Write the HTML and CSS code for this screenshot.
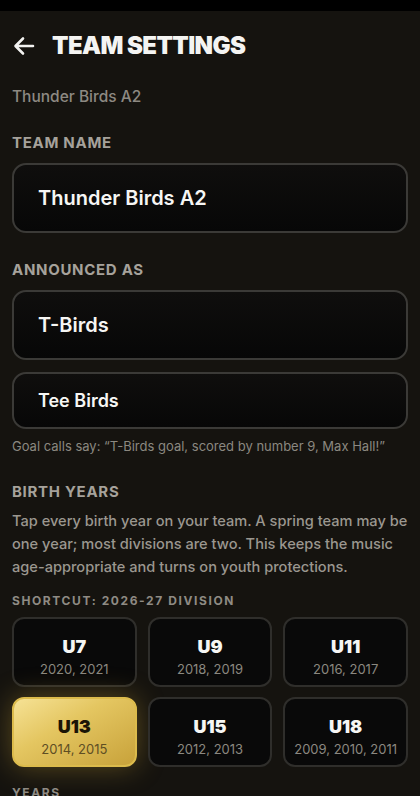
FILE: index.html
```html
<!DOCTYPE html>
<html lang="en">
<head>
<meta charset="utf-8">
<meta name="viewport" content="width=device-width, initial-scale=1">
<title>Team Settings</title>
<link rel="stylesheet" href="styles.css">
</head>
<body>
<div class="statusbar"></div>
<header class="header">
  <svg class="back" viewBox="0 0 24 24" width="24" height="24" aria-hidden="true">
    <path d="M21 12H4M11 4.5L3.5 12L11 19.5" fill="none" stroke="#f2f2f0" stroke-width="2.6" stroke-linecap="round" stroke-linejoin="round"/>
  </svg>
  <h1 class="title">TEAM SETTINGS</h1>
</header>
<main class="content">
  <p class="subtitle">Thunder Birds A2</p>

  <h2 class="label label-first">TEAM NAME</h2>
  <div class="field field-lg">Thunder Birds A2</div>

  <h2 class="label">ANNOUNCED AS</h2>
  <div class="field field-lg">T-Birds</div>
  <div class="field field-sm">Tee Birds</div>
  <p class="helper">Goal calls say: “T-Birds goal, scored by number 9, Max Hall!”</p>

  <h2 class="label">BIRTH YEARS</h2>
  <p class="desc">Tap every birth year on your team. A spring team may be one year; most divisions are two. This keeps the music age-appropriate and turns on youth protections.</p>
  <h3 class="shortcut">SHORTCUT: 2026-27 DIVISION</h3>
  <div class="grid">
    <button class="div-btn"><span class="div-name">U7</span><span class="div-years">2020, 2021</span></button>
    <button class="div-btn"><span class="div-name">U9</span><span class="div-years">2018, 2019</span></button>
    <button class="div-btn"><span class="div-name">U11</span><span class="div-years">2016, 2017</span></button>
    <button class="div-btn selected"><span class="div-name">U13</span><span class="div-years">2014, 2015</span></button>
    <button class="div-btn"><span class="div-name">U15</span><span class="div-years">2012, 2013</span></button>
    <button class="div-btn"><span class="div-name">U18</span><span class="div-years">2009, 2010, 2011</span></button>
  </div>
  <h3 class="shortcut years-label">YEARS</h3>
</main>
</body>
</html>
```
FILE: styles.css
```css
* { box-sizing: border-box; }
html, body {
  margin: 0;
  padding: 0;
  background: #15130f;
  font-family: Inter, "Noto Sans", "Liberation Sans", sans-serif;
  color: #f2f2f0;
  overflow: hidden;
}
.statusbar {
  height: 11px;
  background: #000;
}
.header {
  height: 70px;
  display: flex;
  align-items: center;
  padding: 0 12px 0 12px;
  gap: 16px;
}
.back { display: block; flex: none; }
.title {
  margin: 0;
  font-size: 24px;
  font-weight: 900;
  letter-spacing: -0.6px;
  color: #f4f4f2;
  line-height: 1;
}
.content {
  padding: 0 12px;
}
.subtitle {
  margin: 6px 0 0;
  font-size: 15.5px;
  line-height: 20px;
  font-weight: 500;
  color: #8d8982;
}
.label {
  margin: 28px 0 0;
  font-size: 15px;
  line-height: 18px;
  font-weight: 700;
  letter-spacing: 0.7px;
  color: #a6a29b;
}
.label-first { margin-top: 27px; }
.field {
  margin-top: 11px;
  border: 2px solid #3b3a37;
  border-radius: 14px;
  background: linear-gradient(180deg, #0f0e0d 0%, #070707 100%);
  display: flex;
  align-items: center;
  padding: 0 24px;
  font-weight: 600;
  color: #f6f6f4;
}
.field-lg { height: 70px; font-size: 20px; }
.field-sm { height: 57px; font-size: 18px; margin-top: 12px; }
.helper {
  margin: 9px 0 0;
  font-size: 13px;
  line-height: 17px;
  color: #8b8880;
}
.desc {
  margin: 9px 0 0;
  font-size: 14.6px;
  line-height: 23px;
  font-weight: 500;
  color: #9b978f;
}
.shortcut {
  margin: 14px 0 0;
  font-size: 12px;
  line-height: 16px;
  font-weight: 700;
  letter-spacing: 1.6px;
  color: #8f8b84;
}
.grid {
  margin-top: 8px;
  display: grid;
  grid-template-columns: repeat(3, 1fr);
  gap: 10px 11px;
}
.div-btn {
  height: 70px;
  border: 2px solid #2f2e2b;
  border-radius: 12px;
  background: #090909;
  display: flex;
  flex-direction: column;
  align-items: center;
  justify-content: center;
  gap: 3px;
  padding: 9px 0 0;
  font-family: inherit;
  cursor: pointer;
}
.div-name {
  font-size: 18px;
  line-height: 22px;
  font-weight: 900;
  color: #f6f6f4;
}
.div-years {
  font-size: 13px;
  line-height: 16px;
  color: #8b8880;
}
.div-btn.selected {
  background: linear-gradient(150deg, #f6e295 0%, #e4c661 40%, #c8a23a 100%);
  border-color: #dcbb4c;
  box-shadow: 0 0 28px rgba(205, 165, 55, 0.38);
}
.div-btn.selected .div-name { color: #1b1506; }
.div-btn.selected .div-years { color: #5e4e24; }
.years-label { margin-top: 18px; }
```
